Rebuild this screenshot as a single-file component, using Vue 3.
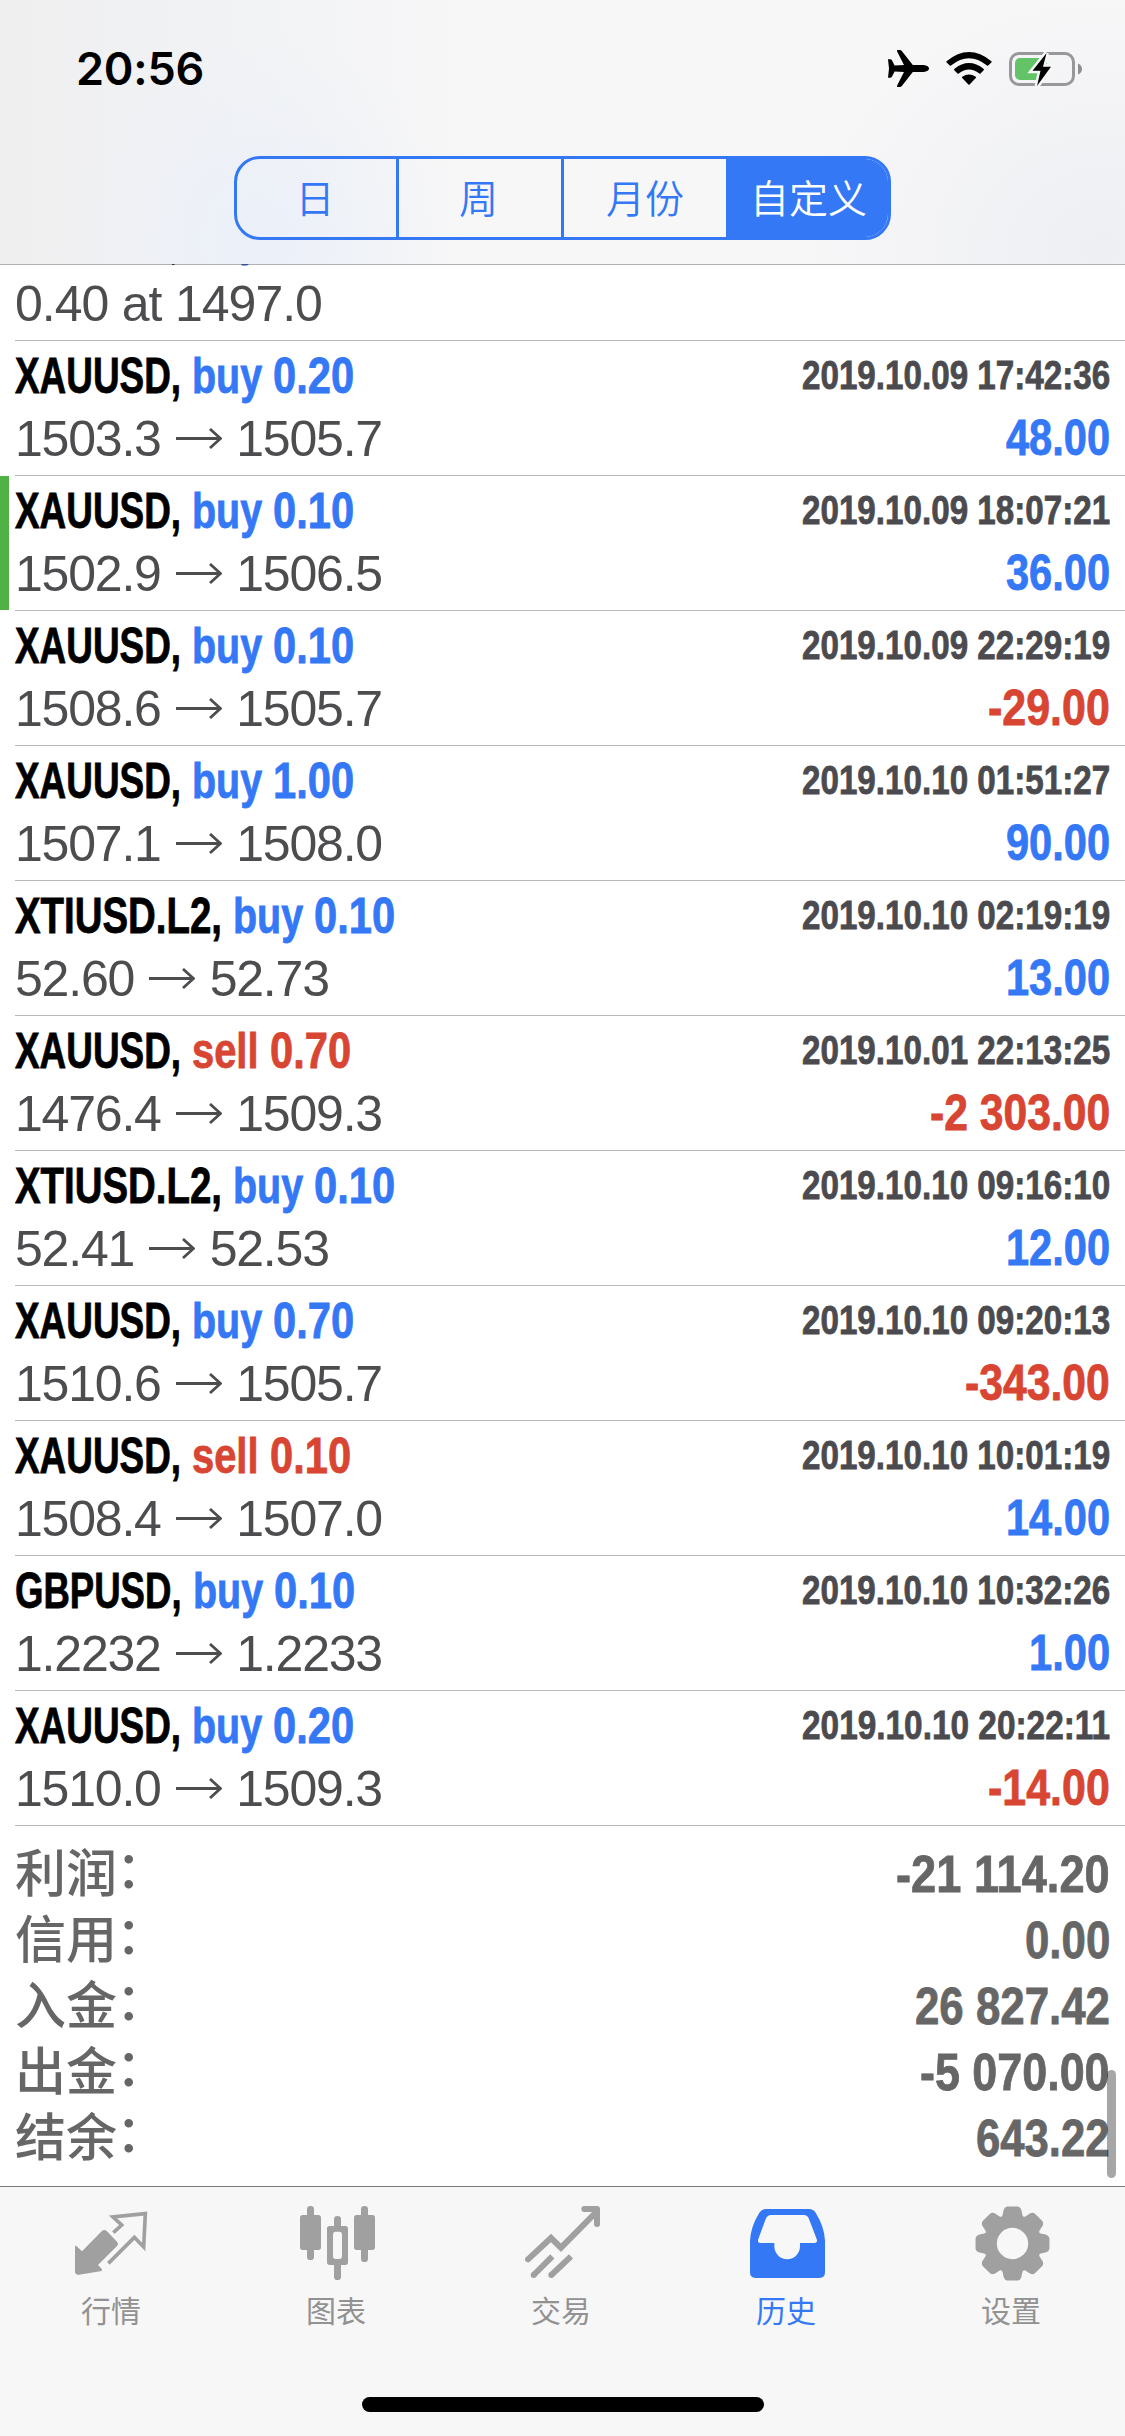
<script setup>
import { h } from 'vue'

// Advance widths, in em, of the condensed bold face used for figures and symbols.
const advances = {
  A: 0.52, B: 0.52, D: 0.56, G: 0.56, I: 0.26, L: 0.46, P: 0.51, S: 0.52, T: 0.46, U: 0.54, X: 0.52,
  b: 0.5, u: 0.5, y: 0.46, s: 0.44, e: 0.475, l: 0.235,
  ',': 0.26, '.': 0.255, ' ': 0.26, ':': 0.22, '-': 0.37,
}

const Condensed = (props) => {
  const width = [...props.text].reduce((sum, c) => sum + (advances[c] ?? 0.478), 0) * props.size
  return h('svg', { width, height: props.size * 1.2, style: 'overflow: visible; flex: none' }, [
    h('text', {
      x: 0,
      y: props.size * 0.95,
      textLength: width,
      lengthAdjust: 'spacingAndGlyphs',
      fill: 'currentColor',
      stroke: 'currentColor',
      'stroke-width': 0.8,
      'font-family': '"Liberation Sans", Arial, sans-serif',
      'font-weight': 700,
      'font-size': props.size * 1.04,
    }, props.text),
  ])
}
Condensed.props = ['text', 'size']

const periods = ['日', '周', '月份', '自定义']

const deals = [
  { symbol: 'XAUUSD,', side: 'buy', lots: '0.20', time: '2019.10.09 17:42:36', from: '1503.3', to: '1505.7', profit: '48.00' },
  { symbol: 'XAUUSD,', side: 'buy', lots: '0.10', time: '2019.10.09 18:07:21', from: '1502.9', to: '1506.5', profit: '36.00', marked: true },
  { symbol: 'XAUUSD,', side: 'buy', lots: '0.10', time: '2019.10.09 22:29:19', from: '1508.6', to: '1505.7', profit: '-29.00' },
  { symbol: 'XAUUSD,', side: 'buy', lots: '1.00', time: '2019.10.10 01:51:27', from: '1507.1', to: '1508.0', profit: '90.00' },
  { symbol: 'XTIUSD.L2,', side: 'buy', lots: '0.10', time: '2019.10.10 02:19:19', from: '52.60', to: '52.73', profit: '13.00' },
  { symbol: 'XAUUSD,', side: 'sell', lots: '0.70', time: '2019.10.01 22:13:25', from: '1476.4', to: '1509.3', profit: '-2 303.00' },
  { symbol: 'XTIUSD.L2,', side: 'buy', lots: '0.10', time: '2019.10.10 09:16:10', from: '52.41', to: '52.53', profit: '12.00' },
  { symbol: 'XAUUSD,', side: 'buy', lots: '0.70', time: '2019.10.10 09:20:13', from: '1510.6', to: '1505.7', profit: '-343.00' },
  { symbol: 'XAUUSD,', side: 'sell', lots: '0.10', time: '2019.10.10 10:01:19', from: '1508.4', to: '1507.0', profit: '14.00' },
  { symbol: 'GBPUSD,', side: 'buy', lots: '0.10', time: '2019.10.10 10:32:26', from: '1.2232', to: '1.2233', profit: '1.00' },
  { symbol: 'XAUUSD,', side: 'buy', lots: '0.20', time: '2019.10.10 20:22:11', from: '1510.0', to: '1509.3', profit: '-14.00' },
]

const totals = [
  { label: '利润', value: '-21 114.20' },
  { label: '信用', value: '0.00' },
  { label: '入金', value: '26 827.42' },
  { label: '出金', value: '-5 070.00' },
  { label: '结余', value: '643.22' },
]

// Gear outline: eight teeth around a centre at 112.5.
const polar = (r, deg) => {
  const a = (deg * Math.PI) / 180
  return `${(112.5 + r * Math.sin(a)).toFixed(1)} ${(112.5 - r * Math.cos(a)).toFixed(1)}`
}
const gear = Array.from({ length: 8 }, (_, i) => {
  const c = i * 45
  return `${i ? 'L' : 'M'}${polar(90, c - 19.5)} L${polar(105, c - 14.5)} Q${polar(112, c - 12)} ${polar(112, c - 8)} L${polar(112, c + 8)} Q${polar(112, c + 12)} ${polar(105, c + 14.5)} L${polar(90, c + 19.5)} Q${polar(84, c + 22.5)} ${polar(90, c + 25.5)}`
}).join(' ') + 'Z'
</script>

<template>
  <div class="screen">
    <header class="header">
      <div class="status">
        <span class="clock">20:56</span>
        <div class="indicators">
          <svg class="plane" width="41" height="37" viewBox="0 0 41 37">
            <path d="M0 9.2H2.2Q3.200 9.2 3.800 10L6.600 15.500L16 15L9 1.2Q8.500 0 9.800 0H11.800Q13 0 13.800 1L24.800 15H35.500Q41 15.600 41 18.500T35.500 22H24.800L13.800 36Q13 37 11.800 37H9.800Q8.500 37 9 35.800L16 22L6.600 21.500L3.800 27Q3.200 27.800 2.200 27.800H0L1 18.500Z" />
          </svg>
          <svg class="wifi" width="46" height="33" viewBox="0 0 46 33">
            <path d="M0.6 9.2Q23-9.2 45.4 9.2Q46 9.8 45.4 10.4L42.2 13.6Q41.6 14.1 41 13.6Q23-1 5 13.6Q4.4 14.1 3.8 13.6L.6 10.4Q0 9.8.6 9.2Z" />
            <path d="M8.3 17Q23 5.2 37.7 17Q38.3 17.6 37.7 18.2L34.5 21.4Q33.9 21.9 33.3 21.4Q23 13.8 12.7 21.4Q12.1 21.9 11.5 21.4L8.3 18.2Q7.7 17.6 8.3 17Z" />
            <path d="M16.2 24.8Q23 20 29.8 24.8Q30.4 25.4 29.8 26L23.6 32.4Q23 33 22.4 32.4L16.2 26Q15.6 25.4 16.2 24.8Z" />
          </svg>
          <svg class="battery" width="74" height="36" viewBox="0 0 74 36">
            <rect x="1.5" y="2.5" width="63" height="31" rx="8.5" fill="none" stroke="#98989c" stroke-width="3" />
            <path d="M69 12.5Q73 14.5 73 18T69 23.5Z" fill="#8e8e93" />
            <rect x="6" y="7" width="32" height="22" rx="5" fill="#62c466" />
            <path d="M37.600 2L23.500 19.800H31.500L28 35L42 15.800H34Z" fill="#000" stroke="#f7f7f8" stroke-width="5" paint-order="stroke" />
          </svg>
        </div>
      </div>
      <nav class="segments">
        <button v-for="(p, i) in periods" :key="p" :class="['segment', { active: i === 3 }]">{{ p }}</button>
      </nav>
    </header>

    <main class="list">
      <svg class="peek" width="80" height="2" viewBox="0 0 80 2">
        <path d="M23 0H26L25 1H23Z" fill="#333" />
        <path d="M92 0H100L98 1.4H93Z" fill="#30509c" />
      </svg>
      <div class="order">0.40 at 1497.0</div>
      <div v-for="d in deals" :key="d.time" :class="['deal', { marked: d.marked }]">
        <div class="line top">
          <div class="title">
            <Condensed :text="d.symbol" :size="48" />
            <div :class="['side', d.side]">
              <Condensed :text="d.side" :size="48" />
              <Condensed :text="d.lots" :size="48" />
            </div>
          </div>
          <Condensed class="time" :text="d.time" :size="39" />
        </div>
        <div class="line bottom">
          <div class="prices">
            <span>{{ d.from }}</span>
            <svg class="arrow" width="46" height="28" viewBox="0 0 46 28">
              <path d="M0 10.5H44M34 1L44.500 10.5L34 20" fill="none" stroke="currentColor" stroke-width="2.8" />
            </svg>
            <span>{{ d.to }}</span>
          </div>
          <Condensed :class="d.profit[0] === '-' ? 'loss' : 'gain'" :text="d.profit" :size="48" />
        </div>
      </div>

      <div class="totals">
        <div v-for="t in totals" :key="t.label" class="total">
          <span class="label">{{ t.label }}<i class="colon">：</i></span>
          <Condensed :text="t.value" :size="50.5" />
        </div>
      </div>
      <div class="scrollbar"></div>
    </main>

    <footer class="tabs">
      <div class="tab">
        <svg class="icon" viewBox="0 0 225 225">
          <path d="M0 124Q0 117 5 121L21 136L80 76Q88 68 96 76L126 107Q132 114 126 120L69 177L80 188Q83 194 76 196L12 206Q0 208 0 196Z" fill="currentColor" />
          <path d="M115 80L140 57L114 33L211 23L206 123L178 94L100 172" fill="none" stroke="currentColor" stroke-width="11" />
        </svg>
        <span>行情</span>
      </div>
      <div class="tab">
        <svg class="icon" viewBox="0 0 225 225" fill="currentColor">
          <rect y="27" width="63" height="105" rx="8" />
          <rect x="21" width="21" height="162" rx="10" />
          <rect x="162" y="27" width="63" height="105" rx="8" />
          <rect x="183" width="21" height="168" rx="10" />
          <path d="M102 60V40Q102 30 112.500 30T123 40V60H136Q144 60 144 68V169Q144 177 136 177H123V212Q123 222 112.500 222T102 212V177H89Q81 177 81 169V68Q81 60 89 60ZM107 77Q99 77 99 86V150Q99 159 107 159H118Q126 159 126 150V86Q126 77 118 77Z" fill-rule="evenodd" />
        </svg>
        <span>图表</span>
      </div>
      <div class="tab">
        <svg class="icon" viewBox="0 0 225 225" fill="none" stroke="currentColor" stroke-width="18">
          <path d="M9 160L78 96L108 125L212 20" stroke-linecap="round" />
          <path d="M178 9H216V54" stroke-linecap="round" stroke-linejoin="round" />
          <path d="M82 151L26 207M138 151L79 207" />
          <circle cx="26" cy="207" r="9" fill="currentColor" stroke="none" />
          <circle cx="79" cy="207" r="9" fill="currentColor" stroke="none" />
        </svg>
        <span>交易</span>
      </div>
      <div class="tab current">
        <svg class="icon" viewBox="0 0 225 225">
          <path d="M0 104Q2 62 28 20Q35 9 48 9H177Q190 9 197 20Q223 62 225 104V199Q225 216 208 216H17Q0 216 0 199ZM25 99L47 39Q52 27 64 27H161Q173 27 177 39L200 99Q204 111 193 111H150V121A38.500 38.500 0 0 1 73 121V111H31Q21 111 25 99Z" fill="currentColor" fill-rule="evenodd" />
        </svg>
        <span>历史</span>
      </div>
      <div class="tab">
        <svg class="icon" viewBox="0 0 225 225">
          <path :d="gear + 'M65.5 112.500a47 47 0 1 0 94 0a47 47 0 1 0-94 0Z'" fill="currentColor" fill-rule="evenodd" />
        </svg>
        <span>设置</span>
      </div>
      <div class="home"></div>
    </footer>
  </div>
</template>

<style>
body {
  margin: 0;
  background: #fff;
}
</style>

<style scoped>
.screen {
  width: 1125px;
  height: 2436px;
  display: flex;
  flex-direction: column;
  overflow: hidden;
  background: #fff;
  font-family: "Liberation Sans", "Noto Sans CJK SC", sans-serif;
}

.header {
  box-sizing: border-box;
  height: 265px;
  flex: none;
  border-bottom: 1px solid #b1b1b6;
  background:
    radial-gradient(ellipse 190px 210px at 260px 240px, #ebf0f9 0%, rgba(235, 240, 249, 0) 100%),
    radial-gradient(ellipse 300px 260px at 1100px 250px, #eeeff3 0%, rgba(238, 239, 243, 0) 100%),
    linear-gradient(90deg, #efeff0 0%, #f1f2f4 18%, #f7f7f8 42%, #f7f7f8 100%);
}

.status {
  height: 156px;
  display: flex;
  justify-content: space-between;
  padding: 0 42px 0 76px;
}

.clock {
  font: 600 45px/54px Inter, sans-serif;
  letter-spacing: -0.2px;
  margin-top: 42px;
}

.indicators {
  display: flex;
  align-items: flex-start;
}

.plane {
  margin: 50px 17px 0 0;
}

.wifi {
  margin: 52px 17px 0 0;
}

.battery {
  margin-top: 51px;
  overflow: visible;
}

.segments {
  box-sizing: border-box;
  width: 657px;
  height: 84px;
  margin-left: 234px;
  display: grid;
  grid-template-columns: 162px 165px 162px 162px;
  border: 3px solid #3478f6;
  border-radius: 26px;
  overflow: hidden;
}

.segment {
  padding: 0 3px 4px 0;
  border: 0;
  border-right: 3px solid #3478f6;
  background: none;
  color: #3478f6;
  font: 350 39px/74px "Noto Sans CJK SC", sans-serif;
}

.segment:nth-child(3) {
  padding-right: 0;
  border-right: 0;
}

.segment.active {
  padding: 0 0 4px 3px;
  border: 0;
  background: #3478f6;
  color: #fff;
}

.list {
  position: relative;
  height: 1921px;
  flex: none;
}

.peek {
  position: absolute;
  left: 149px;
  top: -1px;
  overflow: visible;
}

.order,
.deal {
  box-sizing: border-box;
  margin-left: 15px;
  border-bottom: 1px solid #b9b9bd;
}

.order {
  height: 76px;
  line-height: 79px;
  font-size: 50px;
  letter-spacing: -1px;
  word-spacing: 0.6px;
  color: #4d4d50;
}

.deal {
  height: 135px;
  padding-right: 15px;
  position: relative;
}

.marked::before {
  content: "";
  position: absolute;
  left: -15px;
  top: 0;
  width: 9px;
  height: 134px;
  background: #50b144;
}

.line {
  display: flex;
  justify-content: space-between;
  align-items: flex-end;
}

.top {
  height: 64px;
}

.title,
.side {
  display: flex;
  gap: 11px;
}

.time {
  color: #4b4b4f;
  margin-bottom: 6px;
}

.bottom {
  height: 62px;
}

.prices {
  display: flex;
  align-items: flex-end;
  height: 62px;
  color: #4d4d50;
  font-size: 50px;
  line-height: 42px;
  letter-spacing: -1.2px;
}

.prices span {
  margin-bottom: 7px;
}

.arrow {
  margin: 0 14.5px 11px 15px;
}

.buy,
.gain {
  color: #3478f6;
}

.sell,
.loss {
  color: #d84532;
}

.totals {
  padding: 15px 15px 0;
  color: #666;
}

.total {
  display: flex;
  justify-content: space-between;
  align-items: flex-end;
  height: 66px;
  box-sizing: border-box;
  padding-bottom: 2px;
  font: 500 51px/51px "Noto Sans CJK SC", sans-serif;
}

.label {
  margin-bottom: 9px;
}

.colon {
  position: relative;
  left: -1px;
  top: -4px;
  font-style: normal;
}

.scrollbar {
  position: absolute;
  right: 9px;
  top: 1805px;
  width: 9px;
  height: 108px;
  border-radius: 5px;
  background: rgba(0, 0, 0, 0.35);
}

.tabs {
  box-sizing: border-box;
  height: 250px;
  flex: none;
  display: grid;
  grid-template-columns: repeat(5, 225px);
  grid-template-rows: 210px 15px;
  border-top: 1px solid #77777a;
  background: #f7f7f7;
}

.tab {
  display: flex;
  flex-direction: column;
  align-items: center;
  padding-top: 19px;
  color: #a0a0a0;
  font: 400 30px/40px "Noto Sans CJK SC", sans-serif;
}

.tab span {
  color: #929292;
  margin: 8px 3px 0 0;
}

.icon {
  width: 75px;
  height: 75px;
  margin-right: 1px;
}

.tab.current,
.tab.current span {
  color: #3478f6;
}

.home {
  grid-column: 1 / -1;
  justify-self: center;
  width: 402px;
  height: 15px;
  border-radius: 8px;
  background: #000;
}
</style>
